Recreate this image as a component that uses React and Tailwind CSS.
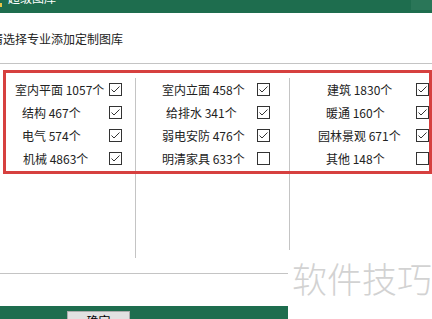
import React from "react";

const font = { fontFamily: '"Noto Sans CJK SC", "Microsoft YaHei", sans-serif' };

const cols = [
  {
    w: "w-[136px]",
    mr: "mr-[13px]",
    items: [
      ["室内平面 1057个", "pl-[15px]", true],
      ["结构 467个", "pl-[22px]", true],
      ["电气 574个", "pl-[22px]", true],
      ["机械 4863个", "pl-[23px]", true],
    ],
  },
  {
    w: "w-[154px]",
    mr: "mr-[19px]",
    items: [
      ["室内立面 458个", "pl-[26px]", true],
      ["给排水 341个", "pl-[30px]", true],
      ["弱电安防 476个", "pl-[26px]", true],
      ["明清家具 633个", "pl-[26px]", false],
    ],
  },
  {
    w: "flex-1",
    mr: "mr-[3px]",
    items: [
      ["建筑 1830个", "pl-[37px]", true],
      ["暖通 160个", "pl-[36px]", true],
      ["园林景观 671个", "pl-[28px]", true],
      ["其他 148个", "pl-[36px]", false],
    ],
  },
];

function Box({ checked }) {
  return (
    <div className="w-[13px] h-[13px] border border-[#333] bg-white shrink-0 flex items-center justify-center">
      {checked && (
        <svg width="11" height="11" viewBox="0 0 11 11">
          <polyline points="1.5,5.5 4,8 9.5,2.5" fill="none" stroke="#333" strokeWidth="1" />
        </svg>
      )}
    </div>
  );
}

export default function App() {
  return (
    <div className="relative w-[432px] h-[319px] overflow-hidden bg-white text-[#222]" style={font}>
      {/* title bar */}
      <div className="h-[13px] bg-[#1e6d4e] flex items-start overflow-hidden">
        <div className="mt-[3px] w-[2px] h-[4px] bg-[#e8c547] shrink-0" />
        <span className="ml-[6px] mt-[-8px] text-[12px] leading-[12px] text-white whitespace-nowrap">超级图库</span>
        <div className="ml-auto w-[21px] h-[10px] bg-[#2a7658]" />
      </div>

      <div className="ml-[-9px] mt-[18px] text-[12px] leading-[16px] whitespace-nowrap">请选择专业添加定制图库</div>

      {/* group */}
      <div className="mt-[16px] h-[211px] border-t border-b border-[#c4c4c4] flex">
        {cols.map((c, ci) => (
          <div key={ci} className={`${c.w} mt-[14px] h-[180px] flex flex-col ${ci < 2 ? "border-r border-[#c4c4c4]" : ""}`}>
            {c.items.map(([t, pl, ch], i) => (
              <div key={i} className="h-[23px] flex items-center">
                <span className={`${pl} text-[12px] leading-[16px] whitespace-nowrap`}>{t}</span>
                <div className={`ml-auto ${c.mr}`}>
                  <Box checked={ch} />
                </div>
              </div>
            ))}
          </div>
        ))}
      </div>

      {/* bottom bar */}
      <div className="mt-[32px] h-[13px] bg-[#1e6d4e] flex items-start pl-[67px] pt-[5px]">
        <div className="w-[63px] h-[20px] shrink-0 bg-[#e1e1e1] border border-[#adadad] text-center text-[12px] leading-[18px] text-black">
          确定
        </div>
      </div>

      {/* red annotation */}
      <div className="absolute left-[3px] top-[70px] w-[429px] h-[104px] border-[3px] border-[#d6403f]" />

      {/* watermark */}
      <div className="absolute left-[288px] top-[250px] w-[144px] h-[69px] bg-white">
        <div className="pl-[4px] pt-[8px] text-[35px] leading-[40px] font-light text-[#d2d2d2] whitespace-nowrap">软件技巧</div>
      </div>
    </div>
  );
}
